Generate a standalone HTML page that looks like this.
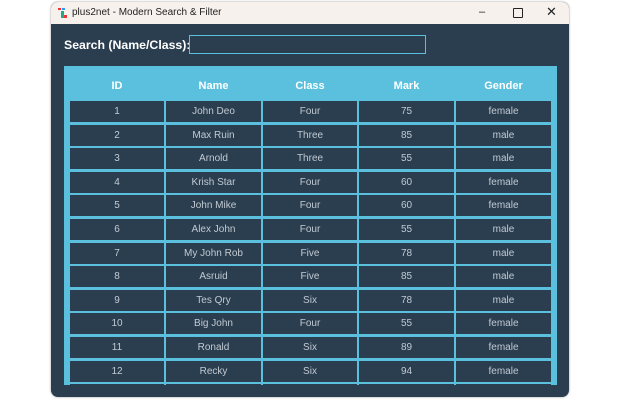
<!DOCTYPE html><html><head><style>
body{margin:0;width:620px;height:400px;background:#fff;position:relative;overflow:hidden;font-family:"Liberation Sans",sans-serif}
.win{position:absolute;left:51px;top:2px;width:518px;height:395px;background:#2b3e50;border-radius:7px;overflow:hidden;box-shadow:0 0 2px #999}
.tb{position:absolute;left:0;top:0;width:518px;height:22px;background:#f7f1ed;font-size:10px;color:#222}
.tb .t{position:absolute;left:21px;top:5px}
.lbl{position:absolute;left:13px;top:36px;color:#fff;font-weight:bold;font-size:12.3px}
.inp{position:absolute;left:138px;top:33px;width:235px;height:17px;border:1.5px solid #5bc0de;background:#2b3e50}
.tbl{position:absolute;left:13px;top:64px;width:493px;height:319px;background:#5bc0de}
.c{position:absolute;background:#2b3e50;color:#c2cad2;font-size:10px;text-align:center;line-height:21px;height:21px}
.h{position:absolute;color:#fff;font-weight:bold;font-size:11px;text-align:center;top:14px}
</style></head><body>
<div class="win">
<div class="tb"><svg style="position:absolute;left:7px;top:6px" width="10" height="11"><rect x="0" y="0" width="3" height="2" fill="#e33"/><rect x="4" y="0" width="3" height="2" fill="#39f"/><rect x="3" y="3" width="3" height="7" fill="#2a8"/><rect x="6" y="7" width="3" height="3" fill="#e33"/></svg><span class="t">plus2net - Modern Search &amp; Filter</span>
<span style="position:absolute;left:428px;top:4px;font-size:11px">–</span>
<span style="position:absolute;left:462px;top:6px;width:8px;height:8px;border:1px solid #222;border-radius:1px"></span>
<span style="position:absolute;left:495px;top:2px;font-size:13px">✕</span></div>
<div class="lbl">Search (Name/Class):</div>
<div class="inp"></div>
<div class="tbl" id="t"></div>
</div>
<script>
var d=[[1,"John Deo","Four",75,"female"],[2,"Max Ruin","Three",85,"male"],[3,"Arnold","Three",55,"male"],[4,"Krish Star","Four",60,"female"],[5,"John Mike","Four",60,"female"],[6,"Alex John","Four",55,"male"],[7,"My John Rob","Five",78,"male"],[8,"Asruid","Five",85,"male"],[9,"Tes Qry","Six",78,"male"],[10,"Big John","Four",55,"female"],[11,"Ronald","Six",89,"female"],[12,"Recky","Six",94,"female"]];
var cx=[6,102,199,295,392],cw=[94,95,94,95,95],hs=["ID","Name","Class","Mark","Gender"],h="";
for(var j=0;j<5;j++)h+='<div class="h" style="left:'+cx[j]+'px;width:'+cw[j]+'px">'+hs[j]+'</div>';
for(var i=0;i<12;i++)for(j=0;j<5;j++)h+='<div class="c" style="left:'+cx[j]+'px;width:'+cw[j]+'px;top:'+(35+Math.round(i*23.6))+'px">'+d[i][j]+'</div>';
for(j=0;j<5;j++)h+='<div class="c" style="left:'+cx[j]+'px;width:'+cw[j]+'px;top:'+(35+Math.round(12*23.6))+'px;height:20px"></div>';
document.getElementById('t').innerHTML=h;
</script>
</body></html>
